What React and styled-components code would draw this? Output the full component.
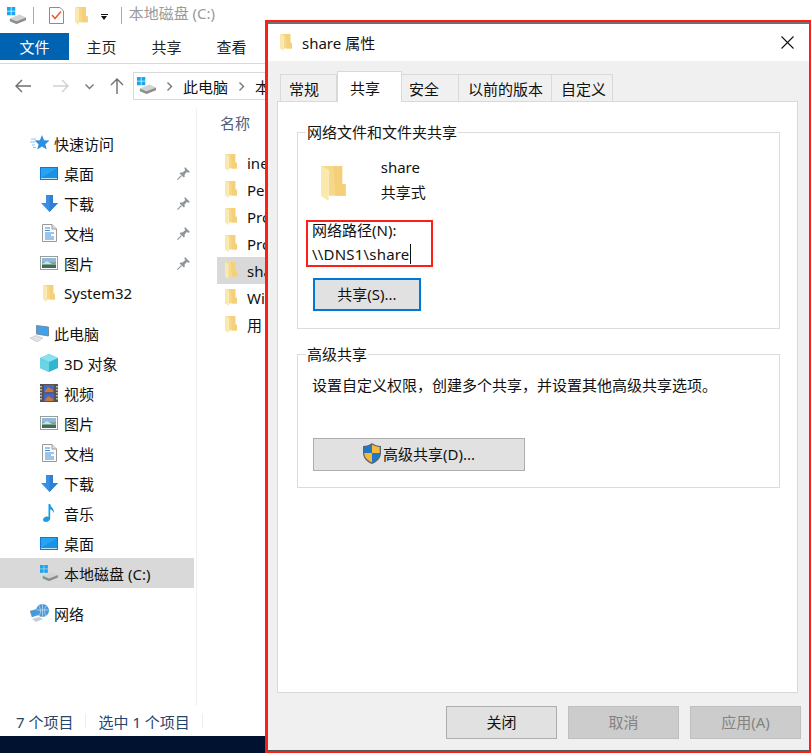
import styled, { createGlobalStyle } from "styled-components";

const CJK = `"Noto Sans", "Noto Sans CJK SC", sans-serif`;

const GlobalStyle = createGlobalStyle`
  html, body {
    margin: 0;
    padding: 0;
    background: #fff;
  }
  body {
    font-family: ${CJK};
    font-size: 15px;
    color: #111;
    overflow: hidden;
  }
  * {
    box-sizing: border-box;
  }
  svg {
    flex-shrink: 0;
  }
`;

const FolderIcon = ({ size = 17 }) => (
  <svg width={(size * 12) / 17} height={size} viewBox="0 0 12 17">
    <path d="M0 0 H10.3 V8.7 H12 V14.5 H3.7 V2 Z" fill="#f7d88a" />
    <path d="M6 0 H10.3 V8.7 H12 V14.5 H7 Z" fill="#f4d07a" />
    <path d="M0 0 L3.7 2 V17 L0 14.5 Z" fill="#fbe8ab" />
  </svg>
);

const DriveIcon = ({ size = 20 }) => (
  <svg width={size} height={(size * 18) / 20} viewBox="0 0 20 18">
    <rect x="0" y="0" width="4" height="4" fill="#1aa5ee" />
    <rect x="4.7" y="0" width="4" height="4" fill="#1aa5ee" />
    <rect x="0" y="4.7" width="4" height="4" fill="#1aa5ee" />
    <rect x="4.7" y="4.7" width="4" height="4" fill="#1aa5ee" />
    <path d="M3 12 L13 8 L20 11 L10 15 Z" fill="#d2d2d2" />
    <path d="M3 12 L10 15 L20 11 V14 L10 18 L3 15 Z" fill="#8d8d8d" />
    <path d="M4 13.5 L7 14.7 V15.7 L4 14.5 Z" fill="#3ecb5b" />
  </svg>
);

const StarIcon = () => (
  <svg width="20" height="16" viewBox="-2 0 20 16">
    <path d="M-1 4 H4 M-2 7 H3 M0 10 H3 M1 12.5 H4" stroke="#8cc4ee" strokeWidth="1" />
    <path d="M10 0 L12.1 5.2 L17.5 5.6 L13.4 9.2 L14.7 14.6 L10 11.6 L5.3 14.6 L6.6 9.2 L2.5 5.6 L7.9 5.2 Z" fill="#2e8fdf" />
  </svg>
);

const DesktopIcon = () => (
  <svg width="18" height="13" viewBox="0 0 18 13">
    <rect width="18" height="13" fill="#0f78d4" />
    <rect x="1" y="1" width="16" height="10" fill="#27a3f3" />
    <path d="M1 11 L17 1 V11 Z" fill="#1a92e6" />
    <rect x="1" y="11" width="16" height="1" fill="#bfe2fb" />
  </svg>
);

const DownIcon = () => (
  <svg width="17" height="17" viewBox="0 0 17 17">
    <path d="M5 0 H12 V8 H17 L8.5 17 L0 8 H5 Z" fill="#3a8fe3" />
    <path d="M8.5 0 H12 V8 H17 L8.5 17 Z" fill="#2f7fd3" />
  </svg>
);

const DocIcon = () => (
  <svg width="15" height="18" viewBox="0 0 15 18">
    <path d="M0.5 0.5 H10 L14.5 5 V17.5 H0.5 Z" fill="#fbfbfb" stroke="#9a9a9a" />
    <path d="M10 0.5 V5 H14.5" fill="#e0e0e0" stroke="#9a9a9a" />
    <path d="M3 4 H8 M3 6.5 H8 M3 9 H12 M3 11 H9 M3 13 H12 M3 15 H12" stroke="#3d8fd6" strokeWidth="1" />
  </svg>
);

const PictureIcon = () => (
  <svg width="18" height="14" viewBox="0 0 18 14">
    <rect x="0.5" y="0.5" width="17" height="13" fill="#fff" stroke="#9c9c9c" />
    <rect x="2" y="2" width="14" height="4" fill="#8cbbdc" />
    <rect x="2" y="6" width="14" height="3" fill="#7fa596" />
    <rect x="2" y="9" width="14" height="3" fill="#3f6c5d" />
    <path d="M2 8 L7 5 L12 8 Z" fill="#d5dfe2" />
  </svg>
);

const PinIcon = () => (
  <svg width="13" height="13" viewBox="0 0 13 13">
    <path d="M8 0 L13 5 L11.5 5.8 L9.8 5 L7.5 7.8 L7.8 9.8 L6.8 10.6 L2.6 6.4 L3.4 5.4 L5.4 5.6 L8.2 3.2 L7.4 1.4 Z" fill="#8e959b" />
    <path d="M4.4 8.6 L0.4 12.6" stroke="#8e959b" strokeWidth="1.2" />
  </svg>
);

const PcIcon = () => (
  <svg width="20" height="17" viewBox="0 0 20 17">
    <path d="M6.5 0.5 L18.5 2 V11 L6.5 9 Z" fill="#3fa2ea" stroke="#6f7d8a" strokeWidth="0.8" />
    <path d="M0 13 L6 10.5 L13 13 L7 17 Z" fill="#dfe3e6" stroke="#bcc0c4" strokeWidth="0.6" />
  </svg>
);

const CubeIcon = () => (
  <svg width="18" height="18" viewBox="0 0 18 18">
    <path d="M9 0 L18 4 V14 L9 18 L0 14 V4 Z" fill="#2db8cf" />
    <path d="M9 0 L18 4 L9 8 L0 4 Z" fill="#8be2ee" />
    <path d="M0 4 L9 8 V18 L0 14 Z" fill="#6bd3e3" />
  </svg>
);

const FilmIcon = () => (
  <svg width="18" height="18" viewBox="0 0 18 18">
    <rect width="18" height="18" fill="#55534f" />
    <path d="M1 2 V16 M17 2 V16" stroke="#e3e3e3" strokeWidth="1.4" strokeDasharray="1.4 1.6" />
    <rect x="4" y="1" width="10" height="7.5" fill="#4567c4" />
    <rect x="4" y="9.5" width="10" height="7.5" fill="#4567c4" />
    <path d="M5 7 L8 3 L13 6 V8 H5 Z M5 16 L8 12 L13 15 V17 H5 Z" fill="#d2762e" />
  </svg>
);

const MusicIcon = () => (
  <svg width="12" height="18" viewBox="0 0 12 18">
    <path d="M5.5 0 H7.2 C7.4 3 11.5 4.5 11 9 C10 6.5 8.5 5.8 7.2 5.5 V14.5 C7.2 16.5 5 18 2.8 18 C1 18 0 17 0 15.8 C0 14 2 12.6 4 12.6 C4.5 12.6 5 12.7 5.5 12.9 Z" fill="#1e9be8" />
  </svg>
);

const NetworkIcon = () => (
  <svg width="20" height="18" viewBox="0 0 20 18">
    <circle cx="12.5" cy="6.5" r="6.5" fill="#4b97d8" />
    <path d="M7 6 H18 M12.5 0 V13 M9 2 C11 5 11 9 9 12 M16 2 C14 5 14 9 16 12" stroke="#bcdcf3" strokeWidth="0.8" fill="none" />
    <path d="M0 7 L6 5.5 L8 11 L2 13 Z" fill="#3b9ce6" stroke="#8095a8" strokeWidth="0.5" />
    <path d="M2 15 L9 13 L13 15 L6 18 Z" fill="#c9ced2" />
  </svg>
);

const NavArrow = ({ dir = "left", color = "#6e6e6e" }) => (
  <svg width="16" height="14" viewBox="0 0 16 14" fill="none" stroke={color} strokeWidth="1.4">
    {dir === "left" ? <path d="M1 7 H16 M7 1 L1 7 L7 13" /> : <path d="M0 7 H15 M9 1 L15 7 L9 13" />}
  </svg>
);

const UpArrow = () => (
  <svg width="14" height="16" viewBox="0 0 14 16" fill="none" stroke="#6e6e6e" strokeWidth="1.4">
    <path d="M7 16 V1 M1 7 L7 1 L13 7" />
  </svg>
);

const Chevron = ({ dir = "down" }) => (
  <svg width="9" height="9" viewBox="0 0 9 9" fill="none" stroke="#777" strokeWidth="1.4">
    {dir === "down" ? <path d="M0.5 2.5 L4.5 6.5 L8.5 2.5" /> : <path d="M2.5 0.5 L6.5 4.5 L2.5 8.5" />}
  </svg>
);

const ChecklistIcon = () => (
  <svg width="15" height="17" viewBox="0 0 15 17">
    <path d="M0.5 0.5 H11 L14.5 4 V16.5 H0.5 Z" fill="#fff" stroke="#8c8c8c" />
    <path d="M3 8 L6 11.5 L12 4.5" stroke="#e8602c" strokeWidth="1.6" fill="none" />
  </svg>
);

const ShieldIcon = () => (
  <svg width="18" height="21" viewBox="0 0 18 21">
    <path d="M9 0 C11.5 2 14.5 2.8 18 3 V10 C18 15 14 19 9 21 C4 19 0 15 0 10 V3 C3.5 2.8 6.5 2 9 0 Z" fill="#5a6672" />
    <path d="M9 1.6 V10 H1.3 V4 C4 3.8 6.8 3 9 1.6 Z" fill="#1f78c8" />
    <path d="M9 1.6 C11.2 3 14 3.8 16.7 4 V10 H9 Z" fill="#f6b93b" />
    <path d="M1.3 10 H9 V19.4 C4.6 17.6 1.3 14.5 1.3 10 Z" fill="#f6b93b" />
    <path d="M9 10 H16.7 C16.7 14.5 13.4 17.6 9 19.4 Z" fill="#1f78c8" />
  </svg>
);

const CloseIcon = () => (
  <svg width="13" height="13" viewBox="0 0 13 13" stroke="#111" strokeWidth="1.1">
    <path d="M0.5 0.5 L12.5 12.5 M12.5 0.5 L0.5 12.5" />
  </svg>
);

const quickAccess = [
  { icon: <DesktopIcon />, label: "桌面" },
  { icon: <DownIcon />, label: "下载" },
  { icon: <DocIcon />, label: "文档" },
  { icon: <PictureIcon />, label: "图片" },
];

const pcItems = [
  { icon: <CubeIcon />, label: "3D 对象" },
  { icon: <FilmIcon />, label: "视频" },
  { icon: <PictureIcon />, label: "图片" },
  { icon: <DocIcon />, label: "文档" },
  { icon: <DownIcon />, label: "下载" },
  { icon: <MusicIcon />, label: "音乐" },
  { icon: <DesktopIcon />, label: "桌面" },
];

// only the part of each name that shows left of the dialog
const files = ["ine", "Per", "Pro", "Pro", "sha", "Wi", "用"];

const App = () => {
  return (
    <Screen>
      <GlobalStyle />
      <Explorer>
        <TitleBar>
          <DriveIcon size={19} />
          <TitleSep $left={7} />
          <TitleIcon $left={15}>
            <ChecklistIcon />
          </TitleIcon>
          <TitleIcon $left={11}>
            <FolderIcon size={18} />
          </TitleIcon>
          <DropMark>
            <span />
          </DropMark>
          <TitleSep $left={13} />
          <TitleText>本地磁盘 (C:)</TitleText>
        </TitleBar>
        <Ribbon>
          <FileTab>文件</FileTab>
          <RibbonTab>主页</RibbonTab>
          <RibbonTab>共享</RibbonTab>
          <RibbonTab>查看</RibbonTab>
        </Ribbon>
        <NavBar>
          <NavArrow />
          <NavArrow dir="right" color="#d0d0d0" />
          <Chevron />
          <UpArrow />
          <AddressBox>
            <DriveIcon size={19} />
            <Chevron dir="right" />
            <span>此电脑</span>
            <Chevron dir="right" />
            <span>本</span>
          </AddressBox>
        </NavBar>
        <Body>
          <Sidebar>
            <HeadRow>
              <StarIcon />
              快速访问
            </HeadRow>
            {quickAccess.map((item) => (
              <NavRow key={item.label}>
                <IconSlot>{item.icon}</IconSlot>
                <span>{item.label}</span>
                <PinSlot>
                  <PinIcon />
                </PinSlot>
              </NavRow>
            ))}
            <NavRow>
              <IconSlot>
                <FolderIcon />
              </IconSlot>
              <span>System32</span>
            </NavRow>
            <HeadRow $gap>
              <PcIcon />
              此电脑
            </HeadRow>
            {pcItems.map((item) => (
              <NavRow key={item.label + "pc"}>
                <IconSlot>{item.icon}</IconSlot>
                <span>{item.label}</span>
              </NavRow>
            ))}
            <NavRow $selected>
              <IconSlot>
                <DriveIcon size={18} />
              </IconSlot>
              <span>本地磁盘 (C:)</span>
            </NavRow>
            <HeadRow $gap>
              <NetworkIcon />
              网络
            </HeadRow>
          </Sidebar>
          <FileList>
            <ColumnHead>名称</ColumnHead>
            {files.map((name, i) => (
              <FileRow key={i} $selected={name === "sha"}>
                <FolderIcon />
                <span>{name}</span>
              </FileRow>
            ))}
          </FileList>
        </Body>
        <StatusBar>
          <span>7 个项目</span>
          <StatusSep />
          <span>选中 1 个项目</span>
          <StatusSep />
        </StatusBar>
        <Taskbar />
      </Explorer>

      <Dialog>
        <DialogTitle>
          <FolderIcon size={17} />
          <DialogName>share 属性</DialogName>
          <CloseBox>
            <CloseIcon />
          </CloseBox>
        </DialogTitle>
        <DialogBody>
          <Tabs>
            <Tab $width={57} $pad={8}>
              常规
            </Tab>
            <Tab $width={65} $pad={12} $active>
              共享
            </Tab>
            <Tab $width={57} $pad={7}>
              安全
            </Tab>
            <Tab $width={93} $pad={9}>
              以前的版本
            </Tab>
            <Tab $width={61} $pad={9}>
              自定义
            </Tab>
          </Tabs>
          <TabPanel>
            <Group $height={197}>
              <Legend>网络文件和文件夹共享</Legend>
              <ShareInfo>
                <FolderIcon size={35} />
                <ShareText>
                  <span>share</span>
                  <span>共享式</span>
                </ShareText>
              </ShareInfo>
              <PathBlock>
                <PathLabel>网络路径(N):</PathLabel>
                <PathValue>\\DNS1\share</PathValue>
              </PathBlock>
              <ShareButton>共享(S)...</ShareButton>
            </Group>
            <Group $height={134}>
              <Legend>高级共享</Legend>
              <Description>设置自定义权限，创建多个共享，并设置其他高级共享选项。</Description>
              <AdvancedButton>
                <ShieldIcon />
                高级共享(D)...
              </AdvancedButton>
            </Group>
          </TabPanel>
          <Footer>
            <FooterButton>关闭</FooterButton>
            <FooterButton $disabled>取消</FooterButton>
            <FooterButton $disabled>应用(A)</FooterButton>
          </Footer>
        </DialogBody>
      </Dialog>
    </Screen>
  );
};

const Screen = styled.div`
  position: relative;
  width: 811px;
  height: 753px;
  overflow: hidden;
  background: #fff;
`;

const Explorer = styled.div`
  display: flex;
  flex-direction: column;
  height: 100%;
`;

const TitleBar = styled.div`
  display: flex;
  align-items: center;
  height: 33px;
  padding: 0 0 2px 7px;
`;

const TitleIcon = styled.div`
  display: flex;
  margin-left: ${(p) => p.$left}px;
`;

const TitleSep = styled.div`
  width: 1px;
  height: 17px;
  background: #a8a8a8;
  margin-left: ${(p) => p.$left}px;
`;

const DropMark = styled.div`
  display: flex;
  flex-direction: column;
  align-items: center;
  gap: 1px;
  width: 7px;
  margin-left: 13px;
  margin-top: 3px;

  &::before {
    content: "";
    display: block;
    width: 7px;
    height: 1px;
    background: #111;
  }

  span {
    display: block;
    width: 0;
    height: 0;
    border: 3.5px solid transparent;
    border-top: 4px solid #111;
    border-bottom: 0;
  }
`;

const TitleText = styled.span`
  color: #9a9a9a;
  font-size: 15px;
  margin: -6px 0 0 7px;
`;

const Ribbon = styled.div`
  display: flex;
  height: 31px;
  border-bottom: 1px solid #dadada;
  padding-bottom: 3px;
`;

const FileTab = styled.div`
  display: flex;
  align-items: center;
  justify-content: center;
  width: 69px;
  background: #0063b1;
  color: #fff;
`;

const RibbonTab = styled.div`
  display: flex;
  align-items: center;
  justify-content: center;
  width: 65px;
  color: #222;
`;

const NavBar = styled.div`
  display: flex;
  align-items: center;
  gap: 22px;
  height: 44px;
  padding: 0 0 0 15px;
  flex-shrink: 0;

  > svg:nth-child(3) {
    margin: 0 -6px 0 -6px;
  }
`;

const AddressBox = styled.div`
  display: flex;
  align-items: center;
  gap: 9px;
  height: 28px;
  width: 140px;
  margin-left: -13px;
  padding-left: 3px;
  border: 1px solid #d9d9d9;
  white-space: nowrap;
`;

const Body = styled.div`
  display: flex;
  flex: 1;
  min-height: 0;
`;

const Sidebar = styled.div`
  width: 197px;
  padding-top: 20px;
  padding-right: 2px;
  border-right: 1px solid #f0f0f0;
  flex-shrink: 0;
`;

const HeadRow = styled.div`
  display: flex;
  align-items: center;
  gap: 4px;
  height: 30px;
  padding-left: 30px;
  margin-top: ${(p) => (p.$gap ? "10px" : "0")};
  white-space: nowrap;
`;

const NavRow = styled.div`
  display: flex;
  align-items: center;
  height: 30px;
  padding-left: 40px;
  background: ${(p) => (p.$selected ? "#d9d9d9" : "transparent")};
  white-space: nowrap;
`;

const IconSlot = styled.div`
  display: flex;
  align-items: center;
  justify-content: center;
  width: 18px;
  margin-right: 6px;
`;

const PinSlot = styled.div`
  display: flex;
  margin-left: auto;
  margin-right: 4px;
`;

const FileList = styled.div`
  flex: 1;
  padding-top: 1px;
  padding-left: 20px;
`;

const ColumnHead = styled.div`
  height: 40px;
  padding-left: 3px;
  padding-top: 3px;
  color: #4c607a;
`;

const FileRow = styled.div`
  display: flex;
  align-items: center;
  gap: 10px;
  height: 27px;
  padding-left: 8px;
  background: ${(p) => (p.$selected ? "#d9d9d9" : "transparent")};
  white-space: nowrap;
`;

const StatusBar = styled.div`
  display: flex;
  align-items: center;
  gap: 12px;
  height: 30px;
  padding-left: 16px;
  flex-shrink: 0;
  color: #26456a;
`;

const StatusSep = styled.div`
  width: 1px;
  height: 14px;
  background: #eee;
`;

const Taskbar = styled.div`
  height: 17px;
  flex-shrink: 0;
  background: #001230;
`;

const Dialog = styled.div`
  position: absolute;
  left: 265px;
  top: 20px;
  width: 546px;
  height: 733px;
  display: flex;
  flex-direction: column;
  border: 2px solid #ff1e14;
  border-left-width: 3px;
  background: #f0f0f0;
  box-shadow: inset 0 -1px 0 #555;
`;

const DialogTitle = styled.div`
  display: flex;
  align-items: center;
  height: 39px;
  padding: 0 0 0 12px;
  background: #fff;
  border-top: 2px solid #6f6f6f;
  flex-shrink: 0;
`;

const DialogName = styled.span`
  margin-left: 10px;
`;

const CloseBox = styled.div`
  display: flex;
  margin-left: auto;
  margin-right: 15px;
`;

const DialogBody = styled.div`
  flex: 1;
  display: flex;
  flex-direction: column;
  padding: 10px 11px 0 9px;
  min-height: 0;
`;

const Tabs = styled.div`
  display: flex;
  align-items: flex-end;
  height: 30px;
  padding-left: 3px;
  position: relative;
  z-index: 1;
`;

const Tab = styled.div`
  display: flex;
  align-items: center;
  width: ${(p) => p.$width}px;
  height: ${(p) => (p.$active ? "31px" : "27px")};
  margin-bottom: ${(p) => (p.$active ? "-1px" : "0")};
  padding-top: ${(p) => (p.$active ? "0" : "1px")};
  padding-left: ${(p) => p.$pad}px;
  background: ${(p) => (p.$active ? "#fff" : "#f0f0f0")};
  border: 1px solid #d9d9d9;
  border-bottom: 0;
  border-left: ${(p) => (p.$active ? "1px solid #d9d9d9" : "0")};
  white-space: nowrap;
  &:first-child {
    border-left: 1px solid #d9d9d9;
  }
`;

const TabPanel = styled.div`
  height: 592px;
  background: #fff;
  border: 1px solid #d9d9d9;
  padding: 30px 17px 0 19px;
  flex-shrink: 0;
  display: flex;
  flex-direction: column;
  gap: 25px;
`;

const Group = styled.div`
  position: relative;
  height: ${(p) => p.$height}px;
  border: 1px solid #dcdcdc;
  padding: 0 14px;
`;

const Legend = styled.div`
  position: absolute;
  top: -11px;
  left: 8px;
  padding: 0 1px;
  background: #fff;
  line-height: 20px;
`;

const ShareInfo = styled.div`
  display: flex;
  gap: 35px;
  padding: 33px 0 0 9px;
  height: 84px;
`;

const ShareText = styled.div`
  display: flex;
  flex-direction: column;
  gap: 4px;
  margin-top: -9px;
  line-height: 21px;
`;

const PathBlock = styled.div`
  display: flex;
  flex-direction: column;
  width: 125px;
  height: 45px;
  margin: 4px 0 0 -5px;
  padding-left: 5px;
  outline: 2px solid #ff1e14;
  outline-offset: -1px;
`;

const PathLabel = styled.span`
  line-height: 20px;
  margin-top: -1px;
`;

const PathValue = styled.span`
  line-height: 20px;
  margin-top: 4px;
  width: fit-content;
  letter-spacing: 0.2px;
  border-right: 1px solid #111;
`;

const ShareButton = styled.div`
  display: flex;
  align-items: center;
  justify-content: center;
  width: 108px;
  height: 33px;
  margin: 12px 0 0 1px;
  padding-bottom: 2px;
  background: #e1e1e1;
  border: 2px solid #0078d7;
`;

const Description = styled.div`
  margin-top: 20px;
  line-height: 20px;
  white-space: nowrap;
`;

const AdvancedButton = styled.div`
  display: flex;
  align-items: center;
  justify-content: center;
  gap: 2px;
  width: 212px;
  height: 33px;
  margin: 43px 0 0 1px;
  padding-bottom: 2px;
  background: #e1e1e1;
  border: 1px solid #adadad;
`;

const Footer = styled.div`
  display: flex;
  justify-content: flex-end;
  gap: 11px;
  margin-right: -3px;
  padding-top: 13px;
`;

const FooterButton = styled.div`
  display: flex;
  align-items: center;
  justify-content: center;
  width: 111px;
  height: 33px;
  padding-bottom: 2px;
  background: ${(p) => (p.$disabled ? "#cccccc" : "#e1e1e1")};
  border: 1px solid ${(p) => (p.$disabled ? "#bfbfbf" : "#adadad")};
  color: ${(p) => (p.$disabled ? "#838383" : "#111")};
`;

export default App;
